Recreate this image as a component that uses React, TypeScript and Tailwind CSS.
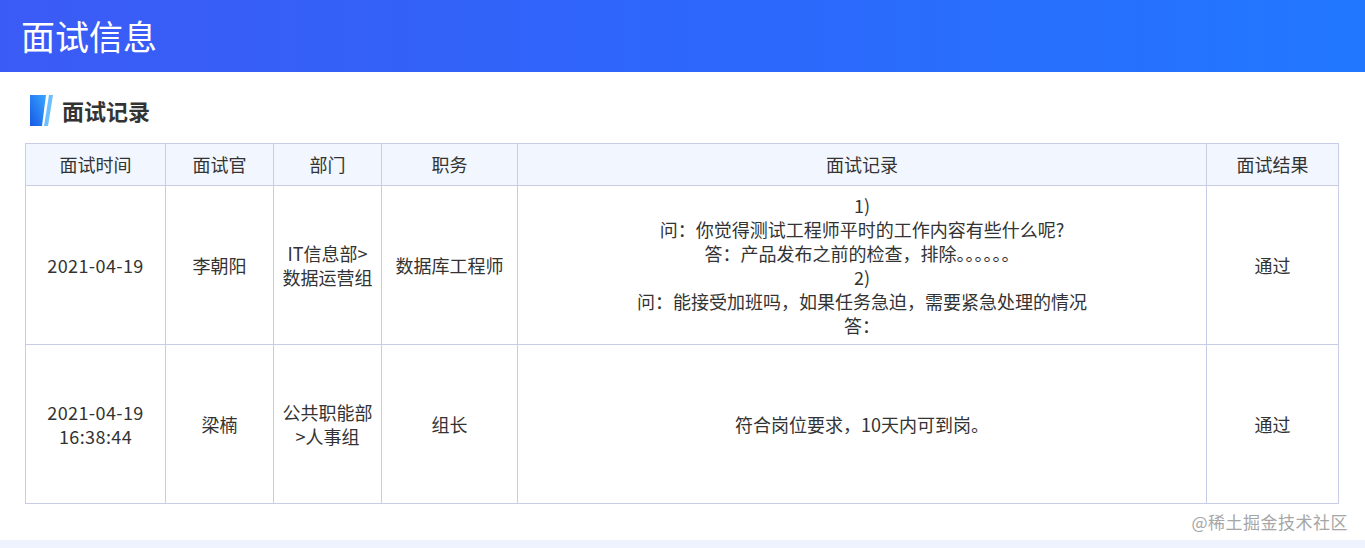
import React from 'react'

const font = { fontFamily: '"Noto Sans CJK SC", "Noto Sans", sans-serif' }

const columns: { title: string; width: string }[] = [
  { title: '面试时间', width: 'w-[140px]' },
  { title: '面试官', width: 'w-[108px]' },
  { title: '部门', width: 'w-[108px]' },
  { title: '职务', width: 'w-[136px]' },
  { title: '面试记录', width: 'w-[689px]' },
  { title: '面试结果', width: 'w-[132px]' },
]

interface Row {
  time: string[]
  interviewer: string
  dept: string[]
  position: string
  record: string[]
  result: string
}

const rows: Row[] = [
  {
    time: ['2021-04-19'],
    interviewer: '李朝阳',
    dept: ['IT信息部>', '数据运营组'],
    position: '数据库工程师',
    record: [
      '1)',
      '问：你觉得测试工程师平时的工作内容有些什么呢?',
      '答：产品发布之前的检查，排除。。。。。。',
      '2)',
      '问：能接受加班吗，如果任务急迫，需要紧急处理的情况',
      '答：',
    ],
    result: '通过',
  },
  {
    time: ['2021-04-19', '16:38:44'],
    interviewer: '梁楠',
    dept: ['公共职能部', '>人事组'],
    position: '组长',
    record: ['符合岗位要求，10天内可到岗。'],
    result: '通过',
  },
]

function SectionIcon() {
  return (
    <svg width="24" height="31" viewBox="0 0 24 31">
      <defs>
        <linearGradient id="blk" x1="0" y1="1" x2="1" y2="0">
          <stop offset="0" stopColor="#1559e6" />
          <stop offset="1" stopColor="#3aa6ff" />
        </linearGradient>
      </defs>
      <polygon points="0,0 16,0 12,31 0,31" fill="url(#blk)" />
      <polygon points="19,0 23,0 18,31 14,31" fill="#6cc0ff" />
    </svg>
  )
}

function Lines({ lines }: { lines: string[] }) {
  return (
    <>
      {lines.map((l, i) => (
        <div key={i}>{l}</div>
      ))}
    </>
  )
}

export default function App() {
  return (
    <div className="w-[1365px] h-[548px] bg-[#eef3fd] overflow-hidden text-[#333]" style={font}>
      <div className="h-[540px] bg-white">
        {/* Header */}
        <div className="h-[72px] bg-gradient-to-r from-[#3b5bf5] via-[#2d66fb] to-[#2177ff] flex items-center px-[21px]">
          <h1 className="text-[34px] text-white leading-none">面试信息</h1>
        </div>

        {/* Section title */}
        <div className="flex items-center gap-[8px] pl-[30px] pt-[23px] pb-[17px]">
          <SectionIcon />
          <h2 className="text-[22px] font-bold leading-[31px] text-[#333]">面试记录</h2>
        </div>

        {/* Table */}
        <table className="ml-[25px] w-[1314px] table-fixed border-collapse text-[18px] text-center">
          <colgroup>
            {columns.map(c => (
              <col key={c.title} className={c.width} />
            ))}
          </colgroup>
          <thead>
            <tr className="bg-[#f2f6fe] h-[42px]">
              {columns.map(c => (
                <th key={c.title} className="border border-[#c9cce6] font-normal text-[#333]">{c.title}</th>
              ))}
            </tr>
          </thead>
          <tbody>
            {rows.map((r, i) => (
              <tr key={i} className="h-[159px]">
                <td className="border border-[#c9cce6] leading-[24px] tracking-[0.4px]"><Lines lines={r.time} /></td>
                <td className="border border-[#c9cce6]">{r.interviewer}</td>
                <td className="border border-[#c9cce6] leading-[24px]"><Lines lines={r.dept} /></td>
                <td className="border border-[#c9cce6]">{r.position}</td>
                <td className="border border-[#c9cce6] leading-[24px]"><Lines lines={r.record} /></td>
                <td className="border border-[#c9cce6]">{r.result}</td>
              </tr>
            ))}
          </tbody>
        </table>

        <div className="flex justify-end pr-[17px] pt-[5px]">
          <span className="text-[17px] text-[#a6a6a6] tracking-[0.5px]">@稀土掘金技术社区</span>
        </div>
      </div>
    </div>
  )
}
